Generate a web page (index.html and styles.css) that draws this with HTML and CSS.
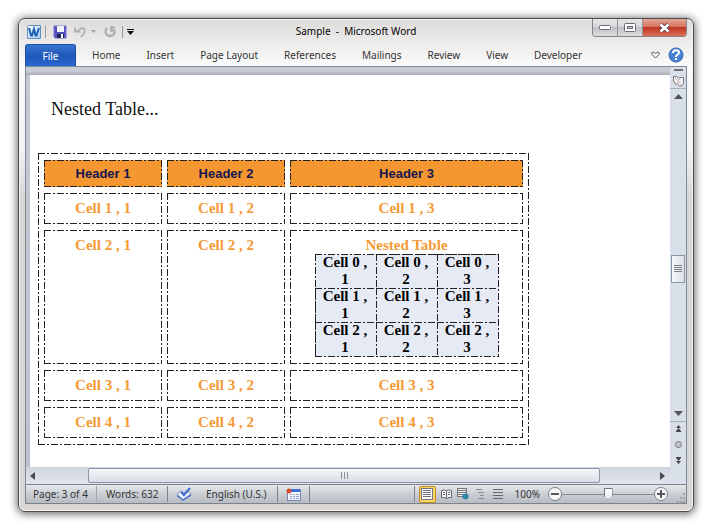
FILE: index.html
```html
<!DOCTYPE html>
<html lang="en">
<head>
<meta charset="utf-8">
<meta name="viewport" content="width=device-width, initial-scale=1">
<title>Sample - Microsoft Word</title>
<link rel="stylesheet" href="styles.css">
</head>
<body>
<div class="window">
  <header class="titlebar">
    <div class="quick">
      <svg class="logo" width="16" height="16" viewBox="0 0 16 16" aria-hidden="true">
        <defs><linearGradient id="wg" x1="0" y1="0" x2="1" y2="1"><stop offset="0" stop-color="#fff"/><stop offset="1" stop-color="#a9cdf0"/></linearGradient></defs>
        <path d="M1.500 2.500l1-1h12v13h-13z" fill="url(#wg)" stroke="#5d8fc8"/>
        <path d="M3 4l2 7.500h1L8 5l1.500 6.500h1L13 4" fill="none" stroke="#1c62b5" stroke-width="2"/>
      </svg>
      <span class="bar"></span>
      <button class="tool save" aria-label="Save"><svg width="14" height="14" viewBox="0 0 14 14"><path d="M1 1h12v12H2l-1-1z" fill="#5350bd" stroke="#7774cf"/><rect x="4" y="1" width="7" height="6" fill="#eef3fc"/><rect x="4" y="9" width="7" height="4" fill="#24245f"/><rect x="8" y="9" width="2" height="4" fill="#fff"/></svg></button>
      <button class="tool undo" aria-label="Undo"><svg width="12" height="12" viewBox="0 0 12 12"><path d="M3 5.500L7 2.500c3-1.500 4.500 2 3 4.500L7 11" fill="none" stroke="#b4b2b2" stroke-width="2"/><path d="M0 1.500h2v3l3-1 2 3H0z" fill="#b4b2b2"/></svg></button>
      <button class="tool drop" aria-label="Undo list"><svg width="5" height="3" viewBox="0 0 5 3"><path d="M0 0h5L2.500 3z" fill="#a5a3a3"/></svg></button>
      <button class="tool redo" aria-label="Repeat"><svg width="12" height="12" viewBox="0 0 12 12"><path d="M3 2C0 5 2 10 6 10s6-4 3.500-7" fill="none" stroke="#b4b2b2" stroke-width="2.500"/><path d="M6 0h5v2H9v4H6z" fill="#b4b2b2"/></svg></button>
      <span class="bar"></span>
      <button class="tool more" aria-label="Customize toolbar"><svg width="7" height="6" viewBox="0 0 7 6"><path d="M0 0h7v1H0zM0 2h7L3.500 6z" fill="#111"/></svg></button>
    </div>
    <h1 class="title">Sample&nbsp; -&nbsp; Microsoft Word</h1>
    <div class="controls">
      <button aria-label="Minimize"><svg width="12" height="5" viewBox="0 0 12 5"><rect x=".5" y=".5" width="11" height="4" rx="1" fill="#fff" stroke="#6c6c78"/></svg></button>
      <button aria-label="Maximize"><svg width="12" height="9" viewBox="0 0 12 9"><rect x=".5" y=".5" width="11" height="8" rx="1" fill="#fff" stroke="#6c6c78"/><rect x="3.500" y="3.500" width="5" height="2" fill="#ccc" stroke="#6c6c78"/></svg></button>
      <button class="close" aria-label="Close"><svg width="13" height="10" viewBox="0 0 13 10"><path d="M2.500 1.500l8 7m0-7l-8 7" stroke="#68434a" stroke-width="4.500"/><path d="M2.500 1.500l8 7m0-7l-8 7" stroke="#fff" stroke-width="2.500"/></svg></button>
    </div>
  </header>
  <nav class="tabs">
    <a class="file" href="#">File</a>
    <a href="#">Home</a>
    <a href="#">Insert</a>
    <a href="#">Page Layout</a>
    <a href="#">References</a>
    <a href="#">Mailings</a>
    <a href="#">Review</a>
    <a href="#">View</a>
    <a href="#">Developer</a>
    <button class="tool expand" aria-label="Expand the ribbon"><svg width="9" height="8" viewBox="0 0 9 8"><path d="M4.500 7L1 3.500v-2L2.500 1l2 2 2-2L8 1.500v2z" fill="#fff" stroke="#555"/></svg></button>
    <button class="tool help" aria-label="Help"><svg width="16" height="16" viewBox="0 0 16 16"><circle cx="8" cy="8" r="7" fill="#4a83d6" stroke="#3564b4"/><path d="M5 6c0-4 6-3.500 6-.5C11 7.500 8 7.500 8 10" fill="none" stroke="#fff" stroke-width="2"/><rect x="7" y="11" width="2" height="2" fill="#fff"/></svg></button>
  </nav>
  <div class="work">
    <div class="desk">
      <main class="page">
        <p class="lead">Nested Table...</p>
        <table class="outer">
          <colgroup><col class="narrow"><col class="narrow"><col></colgroup>
          <thead><tr><th>Header 1</th><th>Header 2</th><th>Header 3</th></tr></thead>
          <tbody>
            <tr><td>Cell 1 , 1</td><td>Cell 1 , 2</td><td>Cell 1 , 3</td></tr>
            <tr><td>Cell 2 , 1</td><td>Cell 2 , 2</td><td>Nested Table
              <table class="inner">
                <tbody>
                  <tr><td>Cell 0 , 1</td><td>Cell 0 , 2</td><td>Cell 0 , 3</td></tr>
                  <tr><td>Cell 1 , 1</td><td>Cell 1 , 2</td><td>Cell 1 , 3</td></tr>
                  <tr><td>Cell 2 , 1</td><td>Cell 2 , 2</td><td>Cell 2 , 3</td></tr>
                </tbody>
              </table></td></tr>
            <tr><td>Cell 3 , 1</td><td>Cell 3 , 2</td><td>Cell 3 , 3</td></tr>
            <tr><td>Cell 4 , 1</td><td>Cell 4 , 2</td><td>Cell 4 , 3</td></tr>
          </tbody>
        </table>
      </main>
      <div class="hscroll">
        <button class="tool" aria-label="Scroll left"><svg width="5" height="8" viewBox="0 0 5 8"><path d="M5 0v8L0 4z" fill="#444a52"/></svg></button>
        <div class="lane"><div class="hthumb"><svg width="7" height="7" viewBox="0 0 7 7"><path d="M.5 0v7M3.500 0v7M6.500 0v7" stroke="#8d9095"/></svg></div></div>
        <button class="tool" aria-label="Scroll right"><svg width="5" height="8" viewBox="0 0 5 8"><path d="M0 0v8l5-4z" fill="#444a52"/></svg></button>
      </div>
    </div>
    <div class="vscroll">
      <div class="split"></div>
      <button class="tool ruler" aria-label="View ruler"><svg width="12" height="12" viewBox="0 0 12 12"><path d="M1.500 1.500h3l2 2 1-1h4v6l-2 2.500h-2l-2-2h-2l-2-3z" fill="#f5eff2" stroke="#77747b"/><path d="M3 3l6 6M8 4l-1 2M5 7l2 1" stroke="#8e858c" stroke-dasharray="1 1"/></svg></button>
      <button class="tool up" aria-label="Scroll up"><svg width="9" height="5" viewBox="0 0 9 5"><path d="M0 5h9L4.500 0z" fill="#50545a"/></svg></button>
      <div class="vlane"><div class="vthumb"><svg width="8" height="8" viewBox="0 0 8 8"><path d="M0 .5h8M0 2.500h8M0 4.500h8M0 6.500h8" stroke="#7b7f86"/></svg></div></div>
      <button class="tool down" aria-label="Scroll down"><svg width="9" height="5" viewBox="0 0 9 5"><path d="M0 0h9L4.500 5z" fill="#50545a"/></svg></button>
      <div class="browse">
        <button class="tool" aria-label="Previous page"><svg width="7" height="7" viewBox="0 0 7 7"><path d="M3.500 0L6 3H1zM3.500 3L6 6H1zM1 6h5v1H1z" fill="#44484e"/></svg></button>
        <button class="tool" aria-label="Select browse object"><svg width="7" height="7" viewBox="0 0 7 7"><circle cx="3.500" cy="3.500" r="3" fill="#c0c3c8" stroke="#73777d"/></svg></button>
        <button class="tool" aria-label="Next page"><svg width="7" height="7" viewBox="0 0 7 7"><path d="M3.500 7L6 4H1zM3.500 4L6 1H1zM1 0h5v1H1z" fill="#44484e"/></svg></button>
      </div>
    </div>
  </div>
  <footer class="status">
    <span class="cell pages">Page: 3 of 4</span>
    <span class="cell words">Words: 632</span>
    <button class="tool proof" aria-label="Proofing"><svg width="16" height="14" viewBox="0 0 16 14"><path d="M1 7l4-3 3 2 3-2 4 3-8 6z" fill="#eaf0fb" stroke="#7f94c0"/><path d="M1 8.500l6 4.500 8-5" fill="none" stroke="#5277c4" stroke-width="1.500"/><path d="M5 5l3 3 6-7" fill="none" stroke="#3c6fd0" stroke-width="2"/></svg></button>
    <span class="cell lang">English (U.S.)</span>
    <button class="tool macro" aria-label="Macros"><svg width="15" height="13" viewBox="0 0 15 13"><rect x="1.500" y="1.500" width="13" height="11" fill="#f3f6fc" stroke="#7185ae"/><rect x="2" y="1" width="12" height="3" fill="#3c6fd6"/><path d="M4 6.500h2m1 0h2m1 0h3M4 8.500h2m1 0h2m1 0h3M4 10.500h2m1 0h2m1 0h3" stroke="#8aa0cf"/><circle cx="3" cy="3" r="2.500" fill="#de4a2c"/></svg></button>
    <div class="views">
      <button class="tool on" aria-label="Print layout"><svg width="12" height="12" viewBox="0 0 12 12"><rect x=".5" y=".5" width="11" height="11" fill="#fff" stroke="#77777c"/><path d="M2 2.500h8M2 4.500h8M2 6.500h8M2 8.500h8" stroke="#6f747b"/></svg></button>
      <button class="tool" aria-label="Full screen reading"><svg width="11" height="11" viewBox="0 0 11 11"><path d="M.5 1.500l3-.5 2 1 2-1 3 .5v7H7l-1.500 1.500L4 8.500H.5zM5.500 2v8" fill="#f6f6f6" stroke="#65686d"/><path d="M2 3.500h2M2 5.500h2M7 3.500h2M7 5.500h2" stroke="#777"/></svg></button>
      <button class="tool" aria-label="Web layout"><svg width="12" height="12" viewBox="0 0 12 12"><rect x=".5" y=".5" width="9" height="8" fill="#eee" stroke="#777"/><path d="M1 2.500h8M1 4.500h8M1 6.500h8" stroke="#777"/><circle cx="8.500" cy="8.500" r="3" fill="#2d80b9"/><path d="M7 7l2 1-1 3" fill="none" stroke="#3c9c70"/></svg></button>
      <button class="tool outline" aria-label="Outline"><svg width="10" height="10" viewBox="0 0 10 10"><path d="M0 .5h6M2 3.500h6M4 6.500h4M2 9.500h6" stroke="#86898e"/></svg></button>
      <button class="tool" aria-label="Draft"><svg width="10" height="10" viewBox="0 0 10 10"><path d="M0 .5h10M0 3.500h10M0 6.500h10M0 9.500h10" stroke="#65696f"/></svg></button>
    </div>
    <label class="percent" for="zoom">100%</label>
    <button class="tool" aria-label="Zoom out"><svg width="14" height="14" viewBox="0 0 14 14"><circle cx="7" cy="7" r="6.500" fill="#f8f8f8" stroke="#7c7f84"/><path d="M3 7h8" stroke="#55585d" stroke-width="2"/></svg></button>
    <input class="slider" id="zoom" type="range" min="0" max="100" value="50">
    <button class="tool" aria-label="Zoom in"><svg width="14" height="14" viewBox="0 0 14 14"><circle cx="7" cy="7" r="6.500" fill="#f8f8f8" stroke="#7c7f84"/><path d="M3 7h8M7 3v8" stroke="#55585d" stroke-width="2"/></svg></button>
    <svg class="grip" width="10" height="10" viewBox="0 0 10 10" aria-hidden="true"><path d="M7 0h2v2H7zM4 4h2v2H4zM7 4h2v2H7zM1 8h2v2H1zM4 8h2v2H4zM7 8h2v2H7z" fill="#9da2a9"/></svg>
  </footer>
</div>
</body>
</html>
```
FILE: styles.css
```css
* { box-sizing: border-box; }

body {
  margin: 0;
  padding: 18px;
  min-height: 100vh;
  display: flex;
  background: #fff;
  font: 10px/16px "Noto Sans", "Open Sans", sans-serif;
  color: #333;
}

button { font: inherit; color: inherit; }
svg { display: block; }

.tool {
  border: 0;
  padding: 0;
  background: none;
  display: flex;
  align-items: center;
  justify-content: center;
}

.window {
  flex: 1;
  min-width: 0;
  display: flex;
  flex-direction: column;
  padding: 0 6px 7px;
  border: 1px solid #4b4b4b;
  border-radius: 7px;
  background: linear-gradient(#dedcda, #fbfbfb 48px, #f3f3f3 130px, #d9d6d4 180px);
  box-shadow: inset 0 0 0 1px #f4f4f4, 0 1px 9px 1px rgba(0, 0, 0, .6);
}

.titlebar {
  display: grid;
  grid-template-columns: 1fr auto 1fr;
  height: 25px;
}

.quick {
  display: flex;
  align-items: center;
  padding-left: 1px;
}

.bar {
  width: 1px;
  height: 12px;
  background: #999;
}

.logo { margin-right: 3px; }
.save { margin: 0 7px; }
.drop { margin: 0 8px 0 5px; }
.redo { margin-right: 6px; }
.more { margin-left: 4px; }

.title {
  margin: 0;
  font-size: 10px;
  font-weight: 400;
  line-height: 24px;
  color: #000;
}

.controls {
  display: flex;
  justify-self: end;
  height: 18px;
  border: 1px solid #85858a;
  border-top: 0;
  border-radius: 0 0 4px 4px;
  overflow: hidden;
}

.controls button {
  display: flex;
  align-items: center;
  justify-content: center;
  width: 25px;
  padding: 0;
  border: 0;
  border-right: 1px solid #929298;
  background: linear-gradient(#e6e6e6, #d6d6d8 50%, #bfc0c3 50%, #dcdcde);
}

.controls .close {
  width: 43px;
  border: 0;
  background: linear-gradient(#e3a596, #d5755f 45%, #bf3620 50%, #dd7056);
}

.tabs {
  display: flex;
  align-items: center;
  height: 22px;
}

.tabs a {
  padding: 0 13px;
  line-height: 22px;
  color: inherit;
  text-decoration: none;
}

.tabs .file {
  width: 51px;
  margin-right: 3px;
  padding: 0;
  text-align: center;
  color: #fff;
  border: 1px solid #1b4fae;
  border-bottom: 0;
  border-radius: 3px 3px 0 0;
  background: linear-gradient(#3a76d2, #2057b8 50%, #2a6bd4);
}

.expand { margin: 0 8px 0 auto; }
.help { margin-right: 3px; }

.work {
  flex: 1;
  display: flex;
  border: 1px solid #7c8a9c;
  border-bottom: 0;
}

.desk {
  flex: 1;
  min-width: 0;
  display: flex;
  flex-direction: column;
  padding-top: 8px;
  background: linear-gradient(#c8ccd3 4px, #a7abb2 8px, #c6c9d1 8px, #bcc3ce);
}

.page {
  flex: 1;
  margin-left: 4px;
  padding: 24px 8px 16px;
  background: #fff;
  font-family: "Liberation Serif", serif;
}

.lead {
  margin: 0 0 34px;
  padding-left: 13px;
  font-size: 18px;
  line-height: 20px;
  color: #111;
}

/* Dash-dot rules, one strip for each edge */
.outer, .outer th, .outer td, .inner {
  --h: repeating-linear-gradient(90deg, #222 0 7px, transparent 7px 9px, #222 9px 11px, transparent 11px 13px);
  --v: repeating-linear-gradient(#222 0 7px, transparent 7px 9px, #222 9px 11px, transparent 11px 13px);
  background:
    var(--h) top / 100% 1px no-repeat,
    var(--h) bottom / 100% 1px no-repeat,
    var(--v) left / 1px 100% no-repeat,
    var(--v) right / 1px 100% no-repeat;
}

.outer {
  width: 491px;
  max-width: 100%;
  table-layout: fixed;
  border-spacing: 5px 6px;
  padding: 1px;
  text-align: center;
  font-weight: 700;
  font-size: 15px;
  line-height: 17px;
  color: #f49a36;
}

.narrow { width: 118px; }

.outer th {
  padding: 5px;
  font-family: "Liberation Sans", sans-serif;
  font-size: 13px;
  color: #14164c;
  background-color: #f49731;
}

.outer td {
  padding: 7px 5px;
  vertical-align: top;
}

.inner {
  width: 184px;
  margin: 0 auto;
  table-layout: fixed;
  border-spacing: 0;
  padding: 0 1px 1px 0;
  color: #000;
  background-color: #e6eaf5;
}

.outer .inner td {
  padding: 0 6px;
  background:
    var(--h) top / 100% 1px no-repeat,
    var(--v) left / 1px 100% no-repeat;
}

.hscroll {
  display: flex;
  height: 17px;
  padding: 0 5px 0 4px;
  background: linear-gradient(#cfd5de, #e0e5ee);
}

.lane { flex: 1; padding: 1px 60px 1px 53px; }

.hthumb {
  display: flex;
  align-items: center;
  justify-content: center;
  height: 15px;
  border: 1px solid #8a96a5;
  border-radius: 2px;
  background: linear-gradient(#f6f8fb, #d8dde5);
}

.vscroll {
  display: flex;
  flex-direction: column;
  align-items: center;
  width: 16px;
  background: #d9dfe9;
}

.split {
  width: 9px;
  height: 2px;
  margin: 2px 0;
  background: #6f7276;
}

.ruler {
  width: 100%;
  height: 16px;
  border-bottom: 1px solid #a9b1bd;
}

.up, .down { height: 15px; }

.vlane {
  flex: 1;
  width: 100%;
  padding: 151px 1px 0;
}

.vthumb {
  display: flex;
  align-items: center;
  justify-content: center;
  height: 28px;
  border: 1px solid #8a96a5;
  background: linear-gradient(90deg, #f7f9fc, #d9dee7);
}

.browse {
  width: 100%;
  display: flex;
  flex-direction: column;
  align-items: center;
  gap: 9px;
  padding: 3px 0 20px;
  border-top: 1px solid #a9b1bd;
}

.status {
  display: flex;
  align-items: center;
  height: 20px;
  border: 1px solid #7b828b;
  background: linear-gradient(#e6e8eb, #cbcfd4 50%, #b7bcc3);
}

.cell, .proof, .macro {
  height: 16px;
  white-space: nowrap;
}

.pages { width: 71px; padding-left: 7px; border-right: 1px solid #a2a7ae; }
.words { width: 71px; padding-left: 9px; border-right: 1px solid #7e848c; }
.proof { width: 32px; }
.lang { width: 78px; padding-left: 6px; border-right: 1px solid #7e848c; }
.macro { width: 32px; border-right: 1px solid #7e848c; }

.views {
  display: flex;
  align-items: center;
  gap: 5px;
  height: 16px;
  margin-left: auto;
  padding-left: 4px;
  border-left: 1px solid #7e848c;
}

.on {
  width: 17px;
  height: 17px;
  border: 1px solid #c28a25;
  border-radius: 2px;
  background: #fbd767;
}

.outline { margin: 0 2px; }

.percent { margin: 0 8px 0 12px; }

.slider {
  appearance: none;
  width: 92px;
  height: 14px;
  margin: 0;
  background: linear-gradient(#858b94, #858b94) center / 100% 1px no-repeat;
}

.slider::-webkit-slider-thumb {
  appearance: none;
  width: 9px;
  height: 12px;
  background: linear-gradient(#fff, #e4e6ea) content-box, #70757d;
  clip-path: polygon(0 0, 100% 0, 100% 65%, 50% 100%, 0 65%);
  padding: 1px;
}

.grip { align-self: flex-end; margin-left: 8px; }
```
